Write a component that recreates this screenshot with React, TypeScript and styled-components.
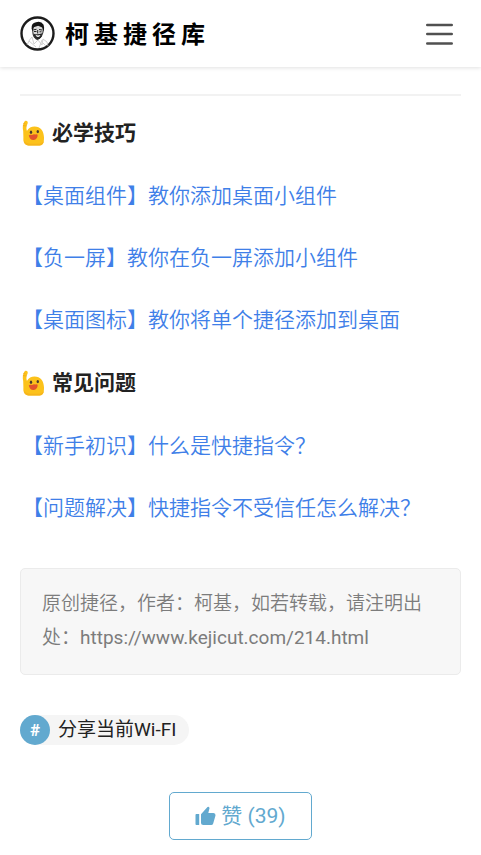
import React from 'react';
import styled, { createGlobalStyle } from 'styled-components';

const Global = createGlobalStyle`
  *, *::before, *::after { box-sizing: border-box; }
  body {
    margin: 0;
    background: #fff;
    color: #222;
    font-family: Roboto, "Noto Sans CJK SC", sans-serif;
    font-size: 21px;
  }
`;

const Header = styled.header`
  display: flex;
  align-items: center;
  justify-content: space-between;
  height: 67px;
  padding: 0 20px;
  background: #fff;
  box-shadow: 0 1px 4px rgba(0, 0, 0, 0.12);
`;

const Brand = styled.a`
  display: flex;
  align-items: center;
  gap: 10px;
  color: #000;
  text-decoration: none;
`;

const BrandName = styled.span`
  padding-bottom: 2px;
  font-family: "Noto Sans CJK SC", sans-serif;
  font-size: 24px;
  font-weight: 700;
  line-height: 34px;
  letter-spacing: 5px;
`;

const MenuButton = styled.button`
  display: flex;
  padding: 8px;
  border: 0;
  background: none;
  color: #505050;
  cursor: pointer;
`;

const Article = styled.main`
  display: flex;
  flex-direction: column;
  padding: 27px 20px 15px;
`;

const Divider = styled.hr`
  width: 100%;
  height: 2px;
  margin: 0 0 18px;
  border: 0;
  background: #f2f2f2;
`;

const Sections = styled.div`
  display: flex;
  flex-direction: column;
  gap: 26px;
`;

const Heading = styled.h2`
  display: flex;
  align-items: center;
  gap: 6px;
  margin: 0;
  font-size: 21px;
  font-weight: 700;
  line-height: 38px;
`;

const LinkList = styled.ul`
  display: flex;
  flex-direction: column;
  gap: 26px;
  margin: 0;
  padding: 0 0 0 2px;
  list-style: none;
`;

const LinkItem = styled.li`
  line-height: 36px;
`;

const ArticleLink = styled.a`
  color: #3f7fe8;
  font-weight: 350;
  text-decoration: none;
`;

const Notice = styled.p`
  margin: 42px 0 0;
  padding: 18px 21px 19px;
  border: 1px solid #ebebeb;
  border-radius: 5px;
  background: #f7f7f7;
  color: #7c7c7c;
  font-size: 19px;
  font-weight: 350;
  line-height: 34px;
`;

const SourceUrl = styled.span`
  font-weight: 400;
`;

const Tag = styled.a`
  display: flex;
  align-self: flex-start;
  align-items: center;
  gap: 8px;
  margin-top: 40px;
  padding-right: 13px;
  border-radius: 15px;
  background: #f5f5f5;
  color: #222;
  font-size: 19px;
  line-height: 30px;
  text-decoration: none;
`;

const TagMark = styled.span`
  width: 30px;
  border-radius: 50%;
  background: #62a9cf;
  color: #fff;
  font-size: 17px;
  font-weight: 700;
  text-align: center;
`;

const LikeButton = styled.button`
  display: flex;
  align-self: center;
  align-items: center;
  gap: 5px;
  margin-top: 47px;
  padding: 0 25px;
  border: 1px solid #62a9cf;
  border-radius: 5px;
  background: #fff;
  color: #62a9cf;
  font-family: inherit;
  font-size: 21px;
  line-height: 46px;
  cursor: pointer;
`;

const Portrait = () => (
  <svg width="35" height="35" viewBox="0 0 35 35" aria-hidden="true">
    <circle cx="17.5" cy="17.5" r="16" fill="#fff" stroke="#1c1c1c" strokeWidth="2.4" />
    <path d="M12 21 9.500 24 7 29M12 21l2 7 4-4 4 5 1-6 4 3 1 4M9 25l7 6M22 24l-3 8M23 27l3 3" fill="none" stroke="#c4c4c4" strokeWidth="0.8" />
    <path d="M12.500 12.500 13 18q1 5 4.500 5.500Q22 22 22.800 17l.7-5-2-3h-7z" fill="#d8d8d8" stroke="#222" strokeWidth="0.9" />
    <path d="M11.600 13Q11 7 16 6.300q5-1.600 7.600 2.400 1.200 3-.2 7l-1.200-4.200-4-1.700-4.500 1.500-.7 4z" fill="#141414" />
    <path d="m13.500 13.800 3-.5m2.500.2 3 .5M14 15.500h2.500m3 .3h2M17.700 14v3.500" stroke="#222" strokeWidth="1" />
    <path d="M13.200 17.500q4 1.800 9-.2-.6 5.600-4.500 6.300-3.700-1-4.500-6.100z" fill="#252525" />
    <path d="M15.500 19q2.500.8 5 0-.8 2-2.500 2t-2.500-2z" fill="#fff" />
  </svg>
);

const WavingBlob = () => (
  <svg width="26" height="26" viewBox="0 0 26 26" aria-hidden="true">
    <path d="M3.200 11C2.500 8 2.700 5 4 2.300 4.500.8 6.400.2 7.300 1.300 8.500 2.800 7 4.500 6.500 6.500c-.2 1.700-.1 3 .4 4.500C8.500 8 11.500 6.600 14.500 6.600c6 0 9.300 4.400 9.500 11 .1 5.400-1.500 7.800-4.500 7.800H8.500C4.500 25.400 3 22 3.400 17.500z" fill="#fcc21b" />
    <path d="M3.800 20c.3 3.500 1.900 5.400 4.700 5.400h11c2.600 0 4.200-1.700 4.500-5-1 2.300-3 3.400-6 3.400h-7c-4 0-6-1.200-7.200-3.800z" fill="#f6b51c" />
    <path d="M2.900 5.500 6.500 6M3.300 3.500l2 .3" stroke="#eaa51a" strokeWidth="0.7" />
    <ellipse cx="11" cy="12.300" rx="1.200" ry="1.700" fill="#4b3a30" />
    <ellipse cx="17.800" cy="11.600" rx="1.200" ry="1.700" fill="#4b3a30" />
    <path d="M8.800 15.300q1.700-1 3.200-.2 1.800-1.500 3.200-.6 1.500-.8 2.500.3-.1 4.600-4 5.200-4.200.2-4.900-4.700z" fill="#e2542c" />
  </svg>
);

const MenuIcon = () => (
  <svg width="27" height="24" viewBox="0 0 27 24" aria-hidden="true">
    <path d="M1.300 3h24.400M1.300 12h24.400M1.300 21.500h24.400" stroke="currentColor" strokeWidth="2.600" strokeLinecap="round" />
  </svg>
);

const ThumbIcon = () => (
  <svg width="21" height="20" viewBox="0 0 21 20" aria-hidden="true">
    <path d="M1.300 8h2.900v11H1.300Q.5 19 .5 18V9q0-1 .8-1zM6 8.300 12.500 1q1.800-1 2 1.200L13.300 7h5.200q2.300.2 2 2.500l-2.300 8q-.5 1.500-2 1.500H8.300Q6 19 6 17z" fill="currentColor" />
  </svg>
);

const sections = [
  {
    title: '必学技巧',
    links: [
      '【桌面组件】教你添加桌面小组件',
      '【负一屏】教你在负一屏添加小组件',
      '【桌面图标】教你将单个捷径添加到桌面',
    ],
  },
  {
    title: '常见问题',
    links: ['【新手初识】什么是快捷指令？', '【问题解决】快捷指令不受信任怎么解决？'],
  },
];

export default function App() {
  return (
    <>
      <Global />
      <Header>
        <Brand href="#">
          <Portrait />
          <BrandName>柯基捷径库</BrandName>
        </Brand>
        <MenuButton type="button" aria-label="菜单">
          <MenuIcon />
        </MenuButton>
      </Header>
      <Article lang="zh-CN">
        <Divider />
        <Sections>
          {sections.map((section) => (
            <React.Fragment key={section.title}>
              <Heading>
                <WavingBlob />
                {section.title}
              </Heading>
              <LinkList>
                {section.links.map((text) => (
                  <LinkItem key={text}>
                    <ArticleLink href="#">{text}</ArticleLink>
                  </LinkItem>
                ))}
              </LinkList>
            </React.Fragment>
          ))}
        </Sections>
        <Notice>
          原创捷径，作者：柯基，如若转载，请注明出处：<SourceUrl>https://www.kejicut.com/214.html</SourceUrl>
        </Notice>
        <Tag href="#">
          <TagMark>#</TagMark>
          分享当前Wi-FI
        </Tag>
        <LikeButton type="button">
          <ThumbIcon />
          赞 (39)
        </LikeButton>
      </Article>
    </>
  );
}
